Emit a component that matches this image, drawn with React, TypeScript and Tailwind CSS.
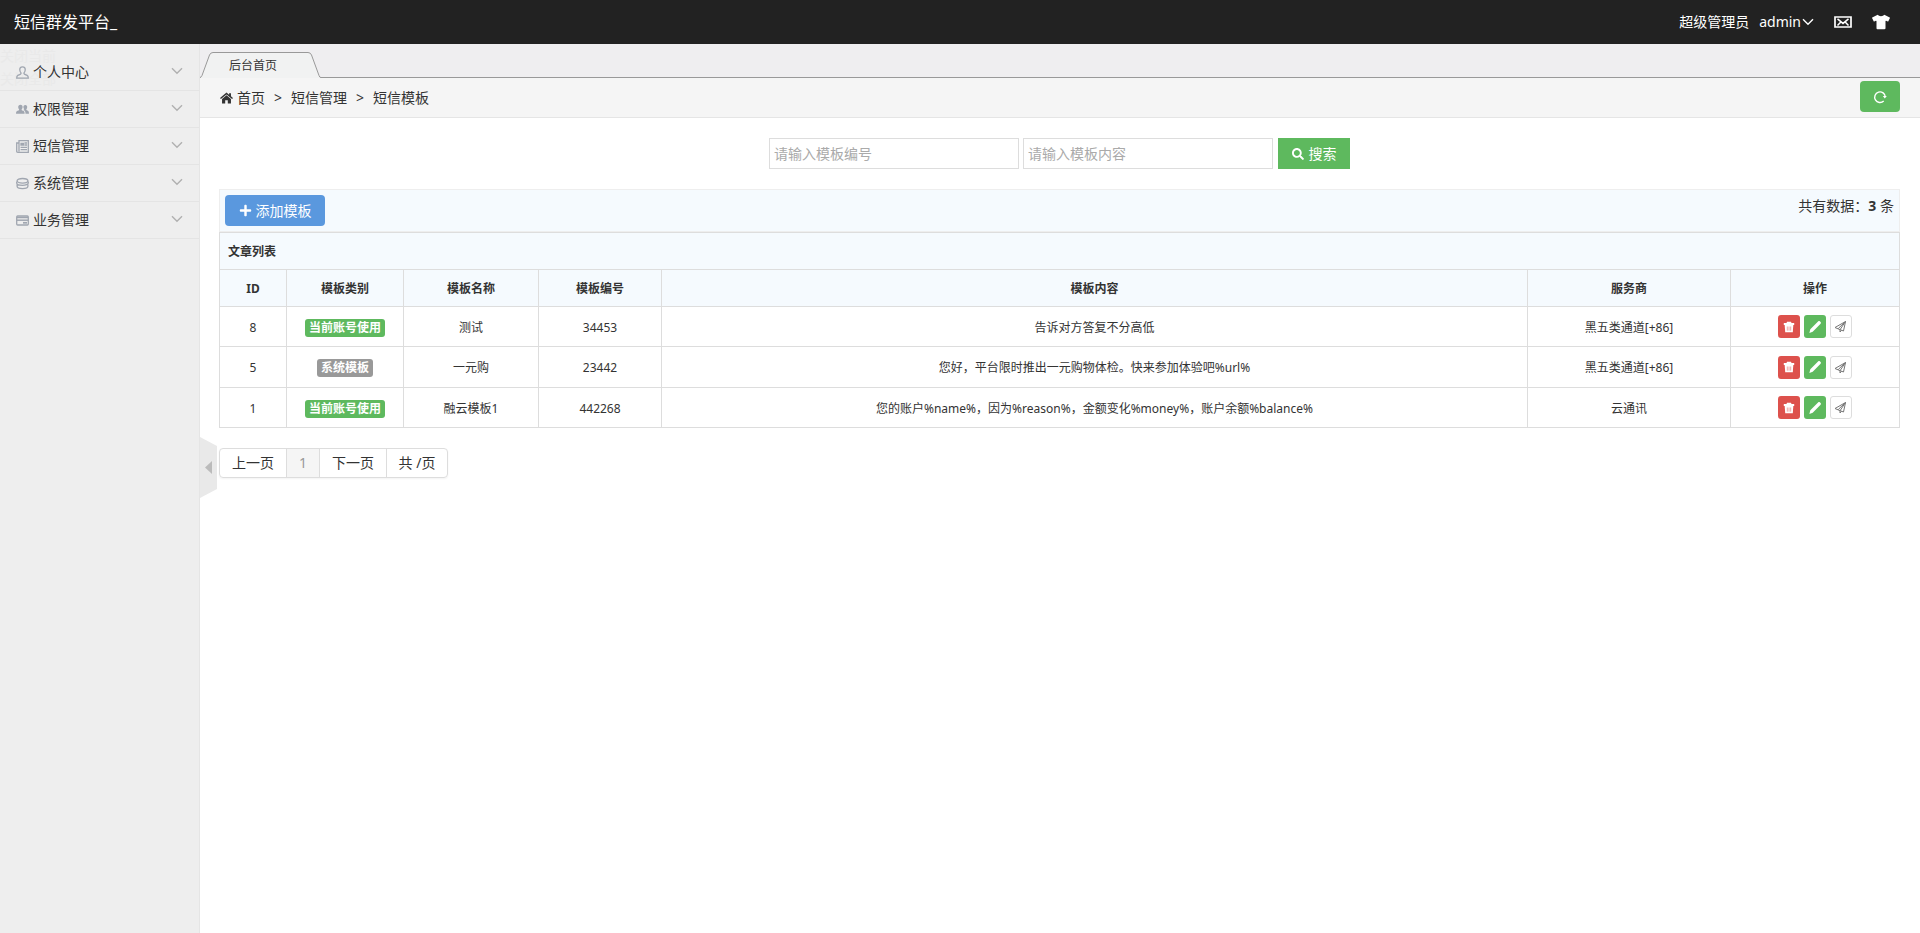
import { useState } from "react";
import { FaPlus, FaSearch, FaTshirt } from "react-icons/fa";

type Template = {
  id: number;
  own: boolean;
  name: string;
  code: string;
  content: string;
  provider: string;
};

const templates: Template[] = [
  { id: 8, own: true, name: "测试", code: "34453", content: "告诉对方答复不分高低", provider: "黑五类通道[+86]" },
  { id: 5, own: false, name: "一元购", code: "23442", content: "您好，平台限时推出一元购物体检。快来参加体验吧%url%", provider: "黑五类通道[+86]" },
  { id: 1, own: true, name: "融云模板1", code: "442268", content: "您的账户%name%，因为%reason%，金额变化%money%，账户余额%balance%", provider: "云通讯" },
];

const Chevron = ({ className = "" }: { className?: string }) => (
  <svg className={className} width="12" height="8" viewBox="0 0 12 8" fill="none" stroke="currentColor" strokeWidth="1.400">
    <path d="M1 1.200L6 6.200L11 1.200" />
  </svg>
);

const HomeIcon = () => (
  <svg width="13" height="12" viewBox="0 0 14 12" fill="currentColor">
    <path d="M7 0L9.800 2.400V1H11.800V4.100L14 6L13 7.200L7 2.200L1 7.200L0 6Z" />
    <path d="M7 3L11.800 7V12H8.400V8.400H5.600V12H2.200V7Z" />
  </svg>
);

const UserIcon = () => (
  <svg width="13" height="13" viewBox="0 0 13 13" fill="none" stroke="currentColor" strokeWidth="1.300">
    <path d="M6.500.8C4.500.8 3.600 2.300 3.800 4c.1 1.300.5 2.200 1.200 2.900.2.7 0 1.100-.7 1.400L1.800 9.400C1 9.800.7 10.500.7 12.200h11.600c0-1.700-.3-2.400-1.100-2.800L8.700 8.300c-.7-.3-.9-.7-.7-1.400.7-.7 1.100-1.600 1.200-2.900C9.400 2.300 8.500.8 6.500.8Z" />
  </svg>
);

const GroupIcon = () => (
  <svg width="13" height="13" viewBox="0 0 13 13" fill="currentColor">
    <path d="M4.500 1.800c1.500 0 2.200 1.100 2.100 2.500-.1 1-.5 1.700-1 2.200 0 .7.300.9 1.400 1.300 1.200.4 1.600 1 1.600 3H0c0-2 .5-2.600 1.700-3 1.100-.4 1.500-.6 1.400-1.300-.5-.5-.8-1.200-.9-2.200-.1-1.400.8-2.500 2.300-2.500Z" />
    <path d="M9.300 2c1.400 0 2 1 1.900 2.300-.1.900-.4 1.600-.9 2 0 .7.300.9 1.200 1.200 1.100.4 1.500 1.200 1.500 3.300H9.500c0-2.200-.5-3-2.200-3.700.9-.5.9-.8.8-1.200-.4-.4-.6-.8-.7-1.600C7.300 3 7.900 2 9.300 2Z" />
  </svg>
);

const NewsIcon = () => (
  <svg width="13" height="13" viewBox="0 0 13 13" fill="none" stroke="currentColor" strokeWidth="1.300">
    <path d="M3 .7h9.300v11.600H1.800C1 12.300.7 12 .7 11.200V3H3V.7ZM3 3v8.400" />
    <path d="M5 3.500h2.500v1.500H5zM8.500 3h2.500M8.500 5h2.500M4.600 7.300h6.400M4.600 9.700h6.400" />
  </svg>
);

const DatabaseIcon = () => (
  <svg width="13" height="13" viewBox="0 0 13 13" fill="none" stroke="currentColor" strokeWidth="1.300">
    <ellipse cx="6.500" cy="3.800" rx="5.400" ry="2.300" />
    <path d="M.7 4.500v1.500c0 1.300 2.600 2.300 5.800 2.300s5.800-1 5.800-2.300V4.500M1.100 7.500v1.800c0 1.300 2.400 2.300 5.400 2.300s5.400-1 5.400-2.300V7.500" />
  </svg>
);

const CardIcon = () => (
  <svg width="13" height="13" viewBox="0 0 13 13" fill="none" stroke="currentColor" strokeWidth="1.300">
    <rect x=".7" y="2" width="11.600" height="9" rx="1" />
    <path d="M1 3.500h11" strokeWidth="1.500" />
    <path d="M1 6.200h11" strokeWidth="1.500" />
    <path d="M7 8.800h4" strokeWidth="1.700" />
  </svg>
);

const TrashIcon = () => (
  <svg width="12" height="12" viewBox="0 0 12 12" fill="#fff">
    <path d="M4 .8h4l.5 1.100h2.700v2.200H.8V1.900h2.700L4 .8Z" />
    <path d="M1.700 4h8.600l-.5 7.200H2.200L1.700 4Z" />
    <path d="M4.300 5.500v4.200M6 5.500v4.200M7.700 5.500v4.200" stroke="#dd514c" strokeWidth=".5" />
  </svg>
);

const PencilIcon = () => (
  <svg width="14" height="14" viewBox="0 0 14 14" fill="#fff">
    <path d="M10.300 1.300c.6-.5 1.200-.4 1.700.1l.6.6c.5.5.5 1.100 0 1.700l-7.900 8.100-3.300 1.100.9-3.600 8-8Z" />
  </svg>
);

const PlaneIcon = () => (
  <svg width="13" height="13" viewBox="0 0 13 13" fill="none" stroke="#777" strokeWidth="1" strokeLinejoin="round">
    <path d="M11.500 1.500L1 7.500l3 1.300 5.500 2.200 2-9.500ZM11.500 1.500L4.200 8.600M11.500 1.500L6 9.700v2.300l1.500-1.700" />
  </svg>
);

const MailIcon = () => (
  <svg width="18" height="12" viewBox="0 0 18 12" fill="none" stroke="currentColor" strokeWidth="1.700">
    <path d="M1 1h16v10H1z" />
    <path d="M3.500 2.800L9 7.400L14.500 2.800M3.500 9.400L6.600 6.200M14.500 9.400L11.400 6.200" strokeWidth="1.500" />
  </svg>
);

const ReloadIcon = () => (
  <svg width="14" height="14" viewBox="0 0 14 14" fill="none" stroke="#fff" strokeWidth="1.400">
    <path d="M10.700 11A5.300 5.300 0 1 1 12.300 7" />
    <path d="M9.800 6h4l-2 2.600z" fill="#fff" stroke="none" />
  </svg>
);

const menu = [
  { label: "个人中心", icon: <UserIcon /> },
  { label: "权限管理", icon: <GroupIcon /> },
  { label: "短信管理", icon: <NewsIcon /> },
  { label: "系统管理", icon: <DatabaseIcon /> },
  { label: "业务管理", icon: <CardIcon /> },
];

const Header = () => (
  <header className="flex h-11 items-center justify-between bg-[#222] pl-[14px] pr-[30px] text-white">
    <a href="#" className="text-base">短信群发平台_</a>
    <div className="flex items-center text-sm">
      <span>超级管理员</span>
      <button type="button" className="ml-[10px] flex items-center gap-px">
        admin
        <Chevron />
      </button>
      <a href="#" aria-label="消息" className="ml-5"><MailIcon /></a>
      <button type="button" aria-label="换肤" className="ml-5"><FaTshirt size={18} /></button>
    </div>
  </header>
);

const Sidebar = () => (
  <aside className="relative w-[200px] shrink-0 border-r border-[#e5e5e5] bg-[#eee] pt-[10px]">
    {/* faded tab context menu */}
    <ul className="absolute left-0 top-0 text-sm leading-[23px] text-[#e9e9e9]">
      <li>关闭当前</li>
      <li>关闭全部</li>
    </ul>
    <nav className="relative">
      {menu.map((item) => (
        <button
          key={item.label}
          type="button"
          className="flex h-[37px] w-full items-center border-b border-[#e4e4e4] px-4 text-sm"
        >
          <span className="text-[#a0a6b0]">{item.icon}</span>
          <span className="ml-1">{item.label}</span>
          <Chevron className="mb-[2px] ml-auto text-[#b0b0b0]" />
        </button>
      ))}
    </nav>
  </aside>
);

const TabBar = () => (
  <div className="flex h-[34px] items-end border-b border-[#999] bg-[#efeef0]">
    <div className="relative -mb-px h-[26px] w-[121px]">
      <svg className="absolute inset-0" width="121" height="26" viewBox="0 0 121 26">
        <path d="M0 26L1.500 24.500 9.500 3Q10.500 .5 13 .5H108Q110.500 .5 111.500 3L119.500 24Q120 25.500 121 26Z" fill="#f1f2f2" />
        <path d="M0 25.500Q1.500 25 2 23.500L9.500 3Q10.500 .5 13 .5H108Q110.500 .5 111.500 3L119 23.500Q119.500 25.500 121 25.500" fill="none" stroke="#999" />
      </svg>
      <a href="#" className="relative block pl-[29px] text-xs leading-7">后台首页</a>
    </div>
  </div>
);

const Breadcrumb = () => (
  <div className="flex h-10 items-center border-b border-[#e5e5e5] bg-[#f5f5f5] px-5 text-sm">
    <HomeIcon />
    <a href="#" className="ml-1">首页</a>
    <span className="mx-[9px]">&gt;</span>
    <span>短信管理</span>
    <span className="mx-[9px]">&gt;</span>
    <span>短信模板</span>
    <button type="button" aria-label="刷新" className="mb-[2px] ml-auto flex h-[31px] w-10 items-center justify-center rounded bg-[#5eb95e]">
      <ReloadIcon />
    </button>
  </div>
);

const iconButton = "flex h-[23px] w-[22px] items-center justify-center rounded-[3px]";

const TemplateTable = () => (
  <table className="w-full table-fixed border-collapse text-center text-xs [&_td]:border [&_td]:border-[#ddd] [&_td]:pt-[2px] [&_th]:border [&_th]:border-[#ddd] [&_th]:pt-[2px]">
    <colgroup>
      <col className="w-[67px]" />
      <col className="w-[117px]" />
      <col className="w-[135px]" />
      <col className="w-[123px]" />
      <col />
      <col className="w-[203px]" />
      <col className="w-[169px]" />
    </colgroup>
    <thead className="bg-[#f5fafe]">
      <tr className="h-[37px]">
        <th colSpan={7} className="px-2 text-left">文章列表</th>
      </tr>
      <tr className="h-[37px]">
        <th>ID</th>
        <th>模板类别</th>
        <th>模板名称</th>
        <th>模板编号</th>
        <th>模板内容</th>
        <th>服务商</th>
        <th>操作</th>
      </tr>
    </thead>
    <tbody>
      {templates.map((item) => (
        <tr key={item.id} className="h-10 even:h-[41px]">
          <td>{item.id}</td>
          <td>
            <span className={`inline-block rounded-[3px] px-1 align-middle font-bold leading-[18px] text-white ${item.own ? "bg-[#5eb95e]" : "bg-[#999]"}`}>
              {item.own ? "当前账号使用" : "系统模板"}
            </span>
          </td>
          <td>{item.name}</td>
          <td>{item.code}</td>
          <td>{item.content}</td>
          <td>{item.provider}</td>
          <td>
            <div className="flex justify-center gap-1 pb-[2px]">
              <button type="button" aria-label="删除" className={`${iconButton} bg-[#dd514c]`}><TrashIcon /></button>
              <button type="button" aria-label="编辑" className={`${iconButton} bg-[#5eb95e]`}><PencilIcon /></button>
              <button type="button" aria-label="发送" className={`${iconButton} border border-[#ddd] bg-white`}><PlaneIcon /></button>
            </div>
          </td>
        </tr>
      ))}
    </tbody>
  </table>
);

const Pagination = () => (
  <div className="mt-5 flex">
    <nav className="flex h-[30px] divide-x divide-[#ddd] overflow-hidden rounded border border-[#ddd] text-sm shadow-xs">
      <a href="#" className="flex w-[67px] items-center justify-center">上一页</a>
      <span className="flex w-[33px] items-center justify-center bg-[#f5f5f5] text-[#999]">1</span>
      <a href="#" className="flex w-[67px] items-center justify-center">下一页</a>
      <span className="flex w-[60px] items-center justify-center">共 /页</span>
    </nav>
  </div>
);

export default function App() {
  const [code, setCode] = useState("");
  const [content, setContent] = useState("");
  const inputStyle = "h-[31px] w-[250px] border border-[#ddd] bg-white px-1 text-sm placeholder:text-[#aaa]";

  return (
    <div className="flex min-h-screen flex-col bg-white font-['Noto_Sans','Noto_Sans_CJK_SC',sans-serif] text-[#333]">
      <Header />
      <div className="flex grow">
        <Sidebar />
        <main className="relative min-w-0 grow">
          <TabBar />
          <Breadcrumb />
          <div className="pb-5 pl-[19px] pr-5 pt-5">
            <form className="flex justify-center" onSubmit={(e) => e.preventDefault()}>
              <input aria-label="模板编号" placeholder="请输入模板编号" value={code} onChange={(e) => setCode(e.target.value)} className={inputStyle} />
              <input aria-label="模板内容" placeholder="请输入模板内容" value={content} onChange={(e) => setContent(e.target.value)} className={`ml-1 ${inputStyle}`} />
              <button type="submit" className="ml-[5px] flex h-[31px] w-[72px] items-center justify-center gap-[5px] bg-[#5eb95e] text-sm text-white">
                <FaSearch size={12} /> 搜索
              </button>
            </form>
            <div className="mt-5 flex justify-between border border-[#eee] bg-[#f5fafe] p-[5px] text-sm">
              <button type="button" className="flex h-[31px] w-[100px] items-center justify-center gap-1 rounded bg-[#5a98de] text-white">
                <FaPlus size={13} /> 添加模板
              </button>
              <span className="leading-[22px]">共有数据：<strong>3</strong> 条</span>
            </div>
            <TemplateTable />
            <Pagination />
          </div>
          <button type="button" aria-label="收起菜单" className="absolute left-0 top-[393px]">
            <svg width="17" height="61" viewBox="0 0 17 61">
              <path d="M0 0L17 9V52L0 61Z" fill="#e9e9e9" />
              <path d="M12 24V37L5 30.500Z" fill="#bbb" />
            </svg>
          </button>
        </main>
      </div>
    </div>
  );
}
